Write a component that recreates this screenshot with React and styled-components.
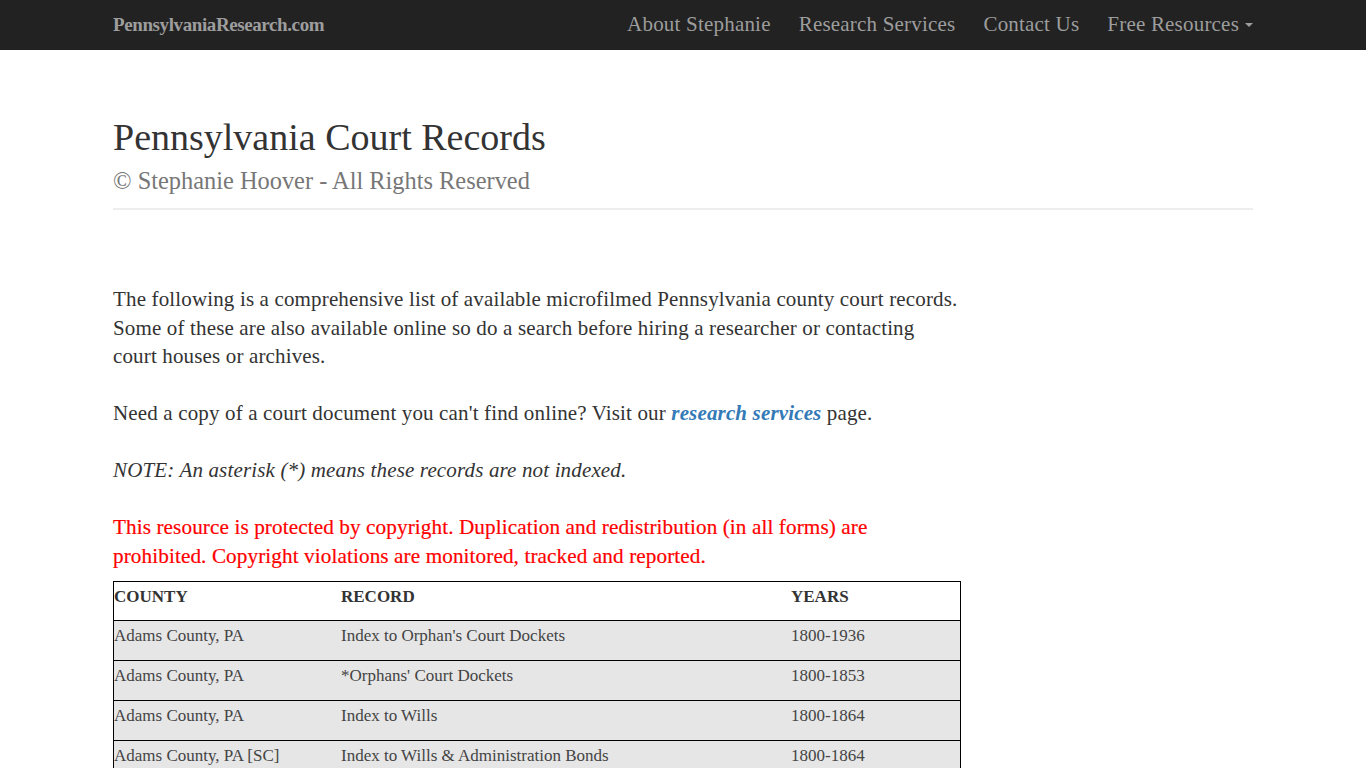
import React from 'react'
import styled, { createGlobalStyle } from 'styled-components'

const GlobalStyle = createGlobalStyle`
  html, body {
    margin: 0;
    padding: 0;
    background: #fff;
  }
  body {
    font-family: 'Liberation Serif', 'Times New Roman', serif;
    color: #333;
  }
`

const rows = [
  { county: 'Adams County, PA', record: "Index to Orphan's Court Dockets", years: '1800-1936' },
  { county: 'Adams County, PA', record: "*Orphans' Court Dockets", years: '1800-1853' },
  { county: 'Adams County, PA', record: 'Index to Wills', years: '1800-1864' },
  { county: 'Adams County, PA [SC]', record: 'Index to Wills & Administration Bonds', years: '1800-1864' },
]

const App = () => {
  return (
    <>
      <GlobalStyle />
      <Navbar>
        <NavInner>
          <Brand href='#'>PennsylvaniaResearch.com</Brand>
          <NavList>
            <NavItem>About Stephanie</NavItem>
            <NavItem>Research Services</NavItem>
            <NavItem>Contact Us</NavItem>
            <NavItem>
              Free Resources <Caret />
            </NavItem>
          </NavList>
        </NavInner>
      </Navbar>
      <Container>
        <PageHeader>
          <Title>Pennsylvania Court Records</Title>
          <Subtitle>© Stephanie Hoover - All Rights Reserved</Subtitle>
        </PageHeader>
        <Column>
          <Para>
            The following is a comprehensive list of available microfilmed Pennsylvania county court records.
            Some of these are also available online so do a search before hiring a researcher or contacting
            court houses or archives.
          </Para>
          <Para>
            Need a copy of a court document you can't find online? Visit our{' '}
            <Link href='#'>research services</Link> page.
          </Para>
          <Para italic>NOTE: An asterisk (*) means these records are not indexed.</Para>
          <Warning>
            This resource is protected by copyright. Duplication and redistribution (in all forms) are
            prohibited. Copyright violations are monitored, tracked and reported.
          </Warning>
          <Table>
            <thead>
              <tr>
                <Th width={227}>COUNTY</Th>
                <Th width={450}>RECORD</Th>
                <Th>YEARS</Th>
              </tr>
            </thead>
            <tbody>
              {rows.map((r, i) => (
                <Row key={i}>
                  <Td>{r.county}</Td>
                  <Td>{r.record}</Td>
                  <Td>{r.years}</Td>
                </Row>
              ))}
            </tbody>
          </Table>
        </Column>
      </Container>
    </>
  )
}

const Navbar = styled.nav`
  background: #222;
  height: 50px;
`

const NavInner = styled.div`
  width: 1140px;
  margin: 0 auto;
  height: 50px;
  display: flex;
  align-items: center;
  justify-content: space-between;
`

const Brand = styled.a`
  color: #9d9d9d;
  font-size: 19px;
  font-weight: bold;
  text-decoration: none;
  letter-spacing: -0.4px;
  margin-top: -1px;
`

const NavList = styled.ul`
  display: flex;
  gap: 28px;
  list-style: none;
  margin: 0;
  padding: 0;
`

const NavItem = styled.li`
  color: #9d9d9d;
  font-size: 21px;
  letter-spacing: 0.2px;
  display: flex;
  align-items: center;
  margin-top: -1px;
`

const Caret = styled.span`
  display: inline-block;
  width: 0;
  height: 0;
  margin-left: 6px;
  border-top: 4px solid #9d9d9d;
  border-left: 4px solid transparent;
  border-right: 4px solid transparent;
`

const Container = styled.div`
  width: 1140px;
  margin: 0 auto;
`

const PageHeader = styled.header`
  padding-top: 67px;
  padding-bottom: 13px;
  border-bottom: 2px solid #eee;
`

const Title = styled.h1`
  margin: 0;
  font-size: 38px;
  font-weight: normal;
  line-height: 40px;
  color: #333;
`

const Subtitle = styled.div`
  margin-top: 10px;
  font-size: 24.4px;
  line-height: 28px;
  color: #777;
`

const Column = styled.section`
  width: 848px;
  padding-top: 75px;
`

const Para = styled.p`
  margin: 0 0 28.5px;
  font-size: 21px;
  letter-spacing: 0.15px;
  line-height: 28.5px;
  color: #333;
  font-style: ${(p) => (p.italic ? 'italic' : 'normal')};
`

const Link = styled.a`
  color: #337ab7;
  font-weight: bold;
  font-style: italic;
  text-decoration: none;
`

const Warning = styled.p`
  margin: 0 0 11px;
  font-size: 21.2px;
  letter-spacing: 0.1px;
  line-height: 28.5px;
  color: #f00;
  -webkit-text-stroke: 0.2px #f00;
`

const Table = styled.table`
  width: 848px;
  border-collapse: collapse;
  border: 1px solid #000;
  font-size: 17px;
`

const Th = styled.th`
  width: ${(p) => (p.width ? `${p.width}px` : 'auto')};
  text-align: left;
  vertical-align: top;
  font-weight: bold;
  line-height: 22px;
  padding: 4px 0 12px 0;
  background: #fff;
  border-bottom: 1px solid #000;
  color: #333;
`

const Row = styled.tr`
  background: #e6e6e6;
  border-bottom: 1px solid #000;
`

const Td = styled.td`
  vertical-align: top;
  line-height: 22px;
  padding: 4px 0 13px 0;
  color: #444;
`

export default App
